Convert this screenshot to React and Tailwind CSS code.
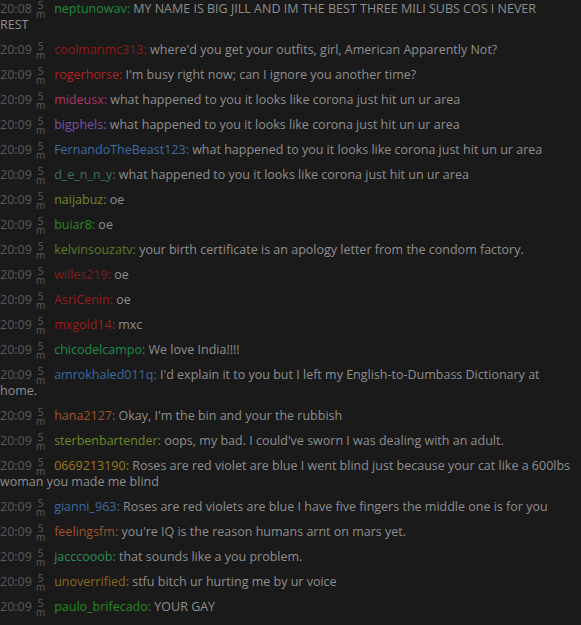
import React from "react";

const messages = [
  { t: "20:08", user: "neptunowav", color: "text-[#1f8a3f]", text: "MY NAME IS BIG JILL AND IM THE BEST THREE MILI SUBS COS I NEVER", rest: "REST" },
  { t: "20:09", user: "coolmanmc313", color: "text-[#8e1b1b]", text: "where'd you get your outfits, girl, American Apparently Not?" },
  { t: "20:09", user: "rogerhorse", color: "text-[#b02424]", text: "I'm busy right now; can I ignore you another time?" },
  { t: "20:09", user: "mideusx", color: "text-[#ad3568]", text: "what happened to you it looks like corona just hit un ur area" },
  { t: "20:09", user: "bigphels", color: "text-[#7b52a0]", text: "what happened to you it looks like corona just hit un ur area" },
  { t: "20:09", user: "FernandoTheBeast123", color: "text-[#3d6ca4]", text: "what happened to you it looks like corona just hit un ur area" },
  { t: "20:09", user: "d_e_n_n_y", color: "text-[#3f6f60]", text: "what happened to you it looks like corona just hit un ur area" },
  { t: "20:09", user: "naijabuz", color: "text-[#6c8a27]", text: "oe" },
  { t: "20:09", user: "buiar8", color: "text-[#278a1c]", text: "oe" },
  { t: "20:09", user: "kelvinsouzatv", color: "text-[#5c7b2a]", text: "your birth certificate is an apology letter from the condom factory." },
  { t: "20:09", user: "willes219", color: "text-[#7c2020]", text: "oe" },
  { t: "20:09", user: "AsriCenin", color: "text-[#9c1d1d]", text: "oe" },
  { t: "20:09", user: "mxgold14", color: "text-[#9c1d1d]", text: "mxc" },
  { t: "20:09", user: "chicodelcampo", color: "text-[#1f8a4a]", text: "We love India!!!!" },
  { t: "20:09", user: "amrokhaled011q", color: "text-[#3d69a0]", text: "I'd explain it to you but I left my English-to-Dumbass Dictionary at", rest: "home." },
  { t: "20:09", user: "hana2127", color: "text-[#a0532f]", text: "Okay, I'm the bin and your the rubbish" },
  { t: "20:09", user: "sterbenbartender", color: "text-[#6c8a27]", text: "oops, my bad. I could've sworn I was dealing with an adult." },
  { t: "20:09", user: "0669213190", color: "text-[#9a7a1c]", text: "Roses are red violet are blue I went blind just because your cat like a 600lbs", rest: "woman you made me blind" },
  { t: "20:09", user: "gianni_963", color: "text-[#3d69a0]", text: "Roses are red violets are blue I have five fingers the middle one is for you" },
  { t: "20:09", user: "feelingsfm", color: "text-[#a0532f]", text: "you're IQ is the reason humans arnt on mars yet." },
  { t: "20:09", user: "jacccooob", color: "text-[#2e8b57]", text: "that sounds like a you problem." },
  { t: "20:09", user: "unoverrified", color: "text-[#8a6b1c]", text: "stfu bitch ur hurting me by ur voice" },
  { t: "20:09", user: "paulo_brifecado", color: "text-[#278a1c]", text: "YOUR GAY" },
];

function Line({ msg }) {
  return (
    <div className="pb-[9px] leading-4">
      <span className="text-[#5a5a5a]">{msg.t}</span>
      <span className="inline-flex flex-col items-center align-middle text-[10px] leading-[9px] text-[#5a5a5a] ml-[4px] mr-[9px] -my-1">
        <span>5</span>
        <span>m</span>
      </span>
      <span className={msg.color}>{msg.user}:</span>{" "}
      <span>
        {msg.text}
        {msg.rest && (
          <>
            <br />
            {msg.rest}
          </>
        )}
      </span>
    </div>
  );
}

export default function App() {
  return (
    <div
      className="w-[581px] h-[625px] overflow-hidden bg-[#1a1a1a] pt-px text-[12.5px] text-[#8e8e8e]"
      style={{ fontFamily: '"Open Sans", "Liberation Sans", sans-serif' }}
    >
      {messages.map((m, i) => (
        <Line key={i} msg={m} />
      ))}
    </div>
  );
}
